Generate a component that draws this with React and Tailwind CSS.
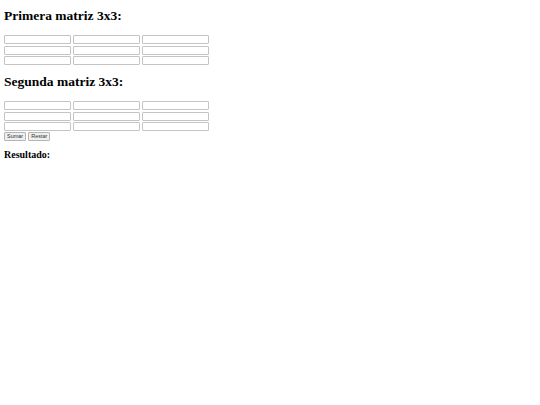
import { useState } from "react";

const fila = [0, 1, 2];

const Matriz = ({ nombre, valores, setValores }) => {
    const cambiar = (i, j, v) => {
        const copia = valores.map((f) => [...f]);
        copia[i][j] = v;
        setValores(copia);
    };
    return (
        <div className="flex flex-col gap-[1.7px]">
            {fila.map((i) => (
                <div key={nombre + i} className="flex gap-[2px]">
                    {fila.map((j) => (
                        <input
                            key={j}
                            type="text"
                            value={valores[i][j]}
                            onChange={(e) => cambiar(i, j, e.target.value)}
                            className="w-[67px] h-[9px] border border-[#c4c4c4] rounded-[1px] bg-white text-[5px] px-[1px] outline-none"
                        />
                    ))}
                </div>
            ))}
        </div>
    );
};

const vacia = () => [["", "", ""], ["", "", ""], ["", "", ""]];

const App = () => {
    const [a, setA] = useState(vacia());
    const [b, setB] = useState(vacia());
    const [resultado, setResultado] = useState(null);

    const operar = (signo) => {
        const r = a.map((f, i) => f.map((x, j) => (Number(x) || 0) + signo * (Number(b[i][j]) || 0)));
        setResultado(r);
    };

    return (
        <div className="min-h-[405px] bg-white px-[4px] pt-[10px] text-black font-['Liberation_Serif',serif]">
            <h2 className="text-[13.5px] leading-[12px] h-[12px] font-bold">Primera matriz 3x3:</h2>
            <div className="mt-[13px]">
                <Matriz nombre="a" valores={a} setValores={setA} />
            </div>
            <h2 className="mt-[11px] text-[13.5px] leading-[12px] h-[12px] font-bold">Segunda matriz 3x3:</h2>
            <div className="mt-[12.5px]">
                <Matriz nombre="b" valores={b} setValores={setB} />
            </div>
            <div className="mt-[1px] flex gap-[2px]">
                <button onClick={() => operar(1)} className="h-[9px] px-[2px] border border-[#b5b5b5] rounded-[1px] bg-[#efefef] text-[5.5px] leading-none font-['Liberation_Sans',sans-serif] text-[#333]">Sumar</button>
                <button onClick={() => operar(-1)} className="h-[9px] px-[2px] border border-[#b5b5b5] rounded-[1px] bg-[#efefef] text-[5.5px] leading-none font-['Liberation_Sans',sans-serif] text-[#333]">Restar</button>
            </div>
            <h3 className="mt-[8.5px] text-[10px] leading-[10px] font-bold">Resultado:</h3>
            {resultado && (
                <div className="mt-[4px] text-[8px]">
                    {resultado.map((f, i) => <div key={i}>{f.join(" ")}</div>)}
                </div>
            )}
        </div>
    );
};

export default App;
